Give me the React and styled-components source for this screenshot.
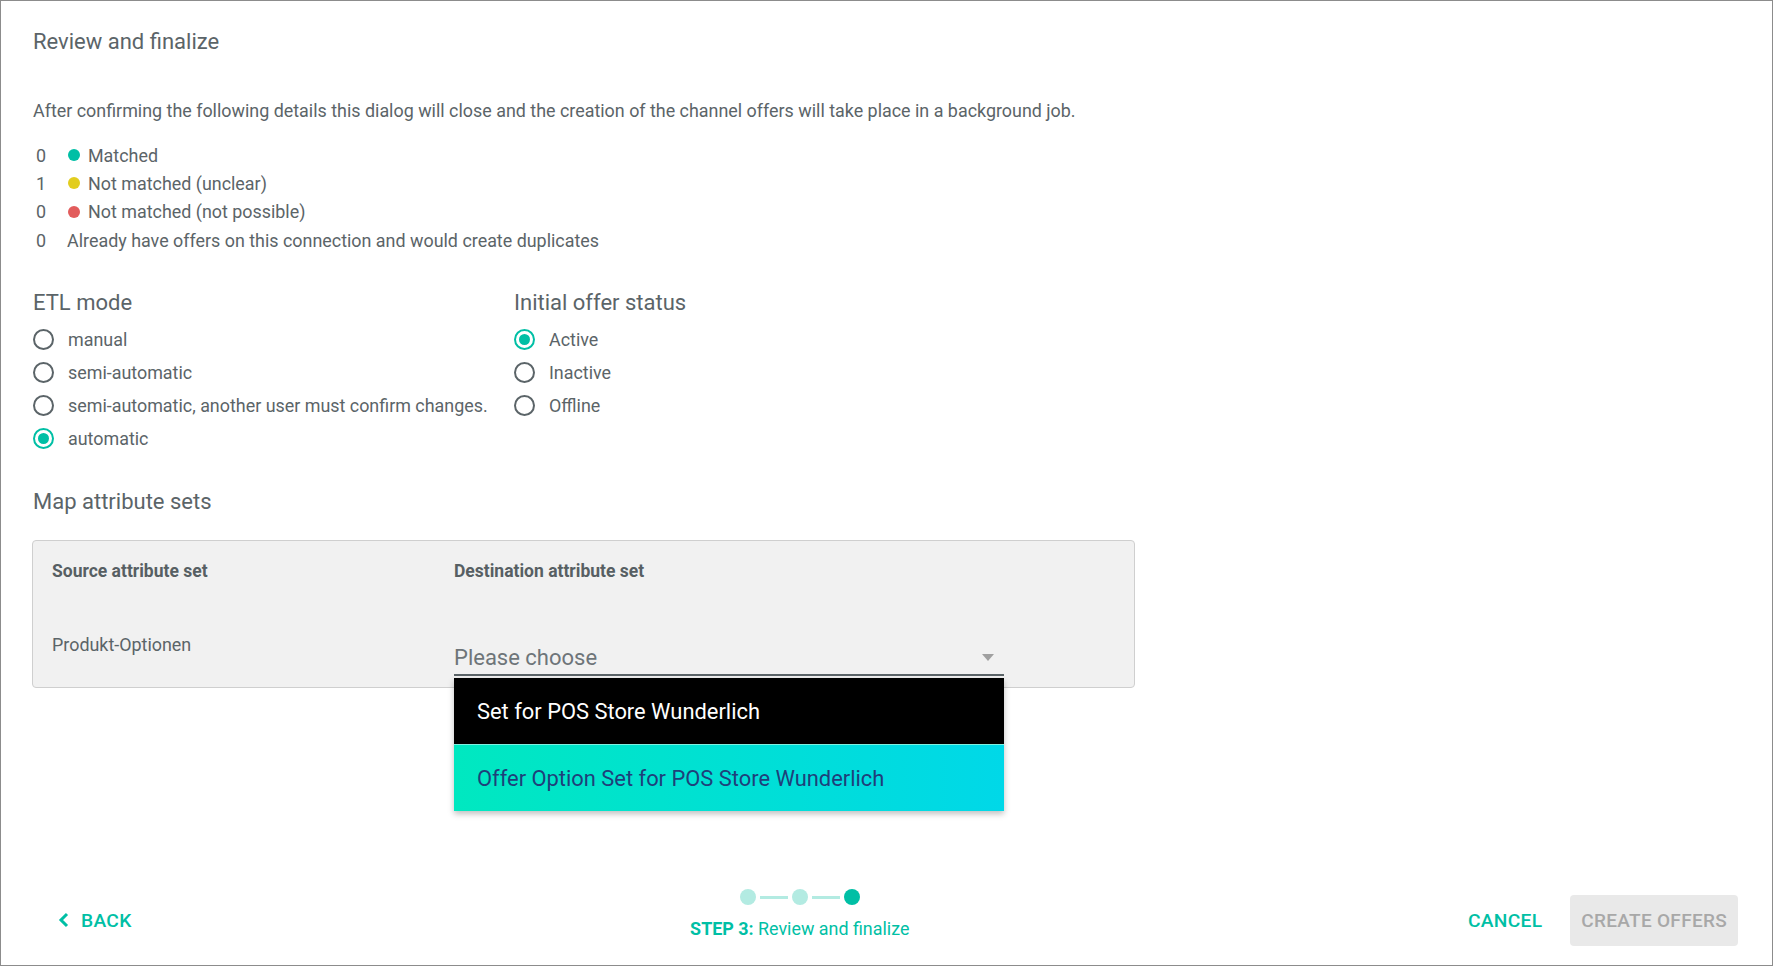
import React from 'react'
import styled, { createGlobalStyle } from 'styled-components'

const GlobalStyle = createGlobalStyle`
  html, body { margin: 0; padding: 0; background: #fff; }
  body { font-family: Roboto, 'Noto Sans', Arial, sans-serif; color: #5b6468; }
  * { box-sizing: border-box; }
`

const teal = '#00bfa5'

const Dialog = styled.div`
  width: 1773px;
  height: 966px;
  border: 1px solid #8c8c8c;
  display: flex;
  flex-direction: column;
  padding: 0 32px;
  overflow: hidden;
`

const Title = styled.h2`
  margin: 28px 0 0;
  font-size: 22px;
  line-height: 26px;
  font-weight: 400;
  color: #5b6468;
`

const Intro = styled.p`
  margin: 44px 0 0;
  font-size: 17.9px;
  line-height: 24px;
`

const Counts = styled.div`
  margin-top: 18px;
  display: flex;
  flex-direction: column;
`

const CountRow = styled.div`
  display: flex;
  align-items: center;
  height: 28.3px;
  font-size: 17.9px;
`

const Num = styled.span`
  width: 34px;
  padding-left: 3px;
`

const Dot = styled.span`
  width: 12px;
  height: 12px;
  border-radius: 50%;
  background: ${p => p.color};
  margin: 0 8px 0 1px;
`

const Options = styled.div`
  display: flex;
  margin-top: 36px;
`

const Group = styled.div`
  width: ${p => p.width || 'auto'};
  display: flex;
  flex-direction: column;
`

const GroupTitle = styled.h3`
  margin: 0 0 7px;
  font-size: 22px;
  font-weight: 400;
  line-height: 26px;
`

const RadioRow = styled.label`
  display: flex;
  align-items: center;
  height: 33px;
  font-size: 17.9px;
`

const RadioCircle = styled.span`
  width: 21px;
  height: 21px;
  border-radius: 50%;
  border: 2px solid ${p => (p.checked ? teal : '#5b6468')};
  margin-right: 14px;
  display: flex;
  align-items: center;
  justify-content: center;
  &::after {
    content: '';
    width: 11px;
    height: 11px;
    border-radius: 50%;
    background: ${p => (p.checked ? teal : 'transparent')};
  }
`

const SectionTitle = styled.h3`
  margin: 34px 0 0;
  font-size: 22px;
  font-weight: 400;
  line-height: 26px;
`

const MapBox = styled.div`
  margin: 25px 0 0 -1px;
  width: 1103px;
  height: 148px;
  background: #f1f1f1;
  border: 1px solid #cfcfcf;
  border-radius: 4px;
  padding: 0 19px;
  display: grid;
  grid-template-columns: 402px 550px;
  grid-template-rows: 50px 1fr;
`

const HeadCell = styled.div`
  font-size: 17.5px;
  line-height: 20px;
  font-weight: 700;
  color: #575f63;
  padding-top: 20px;
`

const Cell = styled.div`
  font-size: 17.9px;
  line-height: 21px;
  padding-top: 43px;
`

const SelectWrap = styled.div`
  position: relative;
  align-self: start;
  margin-top: 45px;
`

const SelectField = styled.div`
  height: 40px;
  padding: 4px 10px 0 0;
  border-bottom: 2px solid #5b6468;
  display: flex;
  align-items: center;
  justify-content: space-between;
  font-size: 22px;
  color: #6e7579;
`

const Caret = styled.span`
  width: 0;
  height: 0;
  border-left: 6px solid transparent;
  border-right: 6px solid transparent;
  border-top: 7px solid #a0a0a0;
`

const Menu = styled.div`
  position: absolute;
  top: calc(100% + 2px);
  left: 0;
  width: 550px;
  box-shadow: 0 3px 6px rgba(0, 0, 0, 0.25);
  z-index: 5;
`

const MenuItem = styled.div`
  height: ${p => (p.highlight ? '67px' : '66px')};
  display: flex;
  align-items: center;
  padding-left: 23px;
  font-size: 21.9px;
  background: ${p => (p.highlight ? 'linear-gradient(90deg, #00e8c0 0%, #00d8e8 100%)' : '#000')};
  color: ${p => (p.highlight ? '#1f3f7a' : '#fff')};
  border-top: ${p => (p.highlight ? '1px solid #7ff0e0' : 'none')};
`

const Footer = styled.div`
  margin-top: auto;
  height: 90px;
  display: flex;
  align-items: center;
  justify-content: space-between;
  padding-left: 25px;
`

const TextButton = styled.button`
  background: none;
  border: none;
  color: ${teal};
  font-family: Roboto, sans-serif;
  font-size: 19.2px;
  font-weight: 500;
  letter-spacing: 0.3px;
  display: flex;
  align-items: center;
  gap: 11px;
  padding: 0;
  cursor: pointer;
`

const Stepper = styled.div`
  display: flex;
  flex-direction: column;
  align-items: center;
  gap: 13px;
  margin-top: -12px;
`

const Steps = styled.div`
  display: flex;
  align-items: center;
  gap: 4px;
`

const StepDot = styled.span`
  width: 16px;
  height: 16px;
  border-radius: 50%;
  background: ${p => (p.active ? teal : '#b3ebe2')};
`

const StepLine = styled.span`
  width: 28px;
  height: 3px;
  background: #b3ebe2;
`

const StepLabel = styled.div`
  font-size: 17.9px;
  line-height: 21px;
  color: ${teal};
  b { font-weight: 700; }
`

const Actions = styled.div`
  display: flex;
  align-items: center;
  gap: 28px;
  margin-right: 2px;
`

const PrimaryButton = styled.button`
  height: 51px;
  padding: 0 11px;
  border: none;
  border-radius: 4px;
  background: #e9e9e9;
  color: #a8a8a8;
  font-family: Roboto, sans-serif;
  font-size: 19px;
  font-weight: 500;
  letter-spacing: 0.3px;
`

const counts = [
  { n: 0, color: '#00bfa5', label: 'Matched' },
  { n: 1, color: '#e2cd1e', label: 'Not matched (unclear)' },
  { n: 0, color: '#e25c5c', label: 'Not matched (not possible)' },
  { n: 0, label: 'Already have offers on this connection and would create duplicates' },
]

const etlModes = [
  { label: 'manual' },
  { label: 'semi-automatic' },
  { label: 'semi-automatic, another user must confirm changes.' },
  { label: 'automatic', checked: true },
]

const statuses = [
  { label: 'Active', checked: true },
  { label: 'Inactive' },
  { label: 'Offline' },
]

const Radio = ({ label, checked }) => (
  <RadioRow>
    <RadioCircle checked={checked} />
    {label}
  </RadioRow>
)

export default function App() {
  return (
    <Dialog>
      <GlobalStyle />
      <Title>Review and finalize</Title>
      <Intro>
        After confirming the following details this dialog will close and the creation of the channel offers will take place in a background job.
      </Intro>
      <Counts>
        {counts.map((c, i) => (
          <CountRow key={i}>
            <Num>{c.n}</Num>
            {c.color && <Dot color={c.color} />}
            {c.label}
          </CountRow>
        ))}
      </Counts>

      <Options>
        <Group width="481px">
          <GroupTitle>ETL mode</GroupTitle>
          {etlModes.map(m => <Radio key={m.label} {...m} />)}
        </Group>
        <Group>
          <GroupTitle>Initial offer status</GroupTitle>
          {statuses.map(s => <Radio key={s.label} {...s} />)}
        </Group>
      </Options>

      <SectionTitle>Map attribute sets</SectionTitle>
      <MapBox>
        <HeadCell>Source attribute set</HeadCell>
        <HeadCell>Destination attribute set</HeadCell>
        <Cell>Produkt-Optionen</Cell>
        <SelectWrap>
          <SelectField>
            Please choose
            <Caret />
          </SelectField>
          <Menu>
            <MenuItem>Set for POS Store Wunderlich</MenuItem>
            <MenuItem highlight>Offer Option Set for POS Store Wunderlich</MenuItem>
          </Menu>
        </SelectWrap>
      </MapBox>

      <Footer>
        <TextButton>
          <svg width="12" height="16" viewBox="0 0 12 16">
            <path d="M9 2 L3 8 L9 14" fill="none" stroke={teal} strokeWidth="3" />
          </svg>
          BACK
        </TextButton>
        <Stepper>
          <Steps>
            <StepDot />
            <StepLine />
            <StepDot />
            <StepLine />
            <StepDot active />
          </Steps>
          <StepLabel><b>STEP 3:</b> Review and finalize</StepLabel>
        </Stepper>
        <Actions>
          <TextButton>CANCEL</TextButton>
          <PrimaryButton>CREATE OFFERS</PrimaryButton>
        </Actions>
      </Footer>
    </Dialog>
  )
}
